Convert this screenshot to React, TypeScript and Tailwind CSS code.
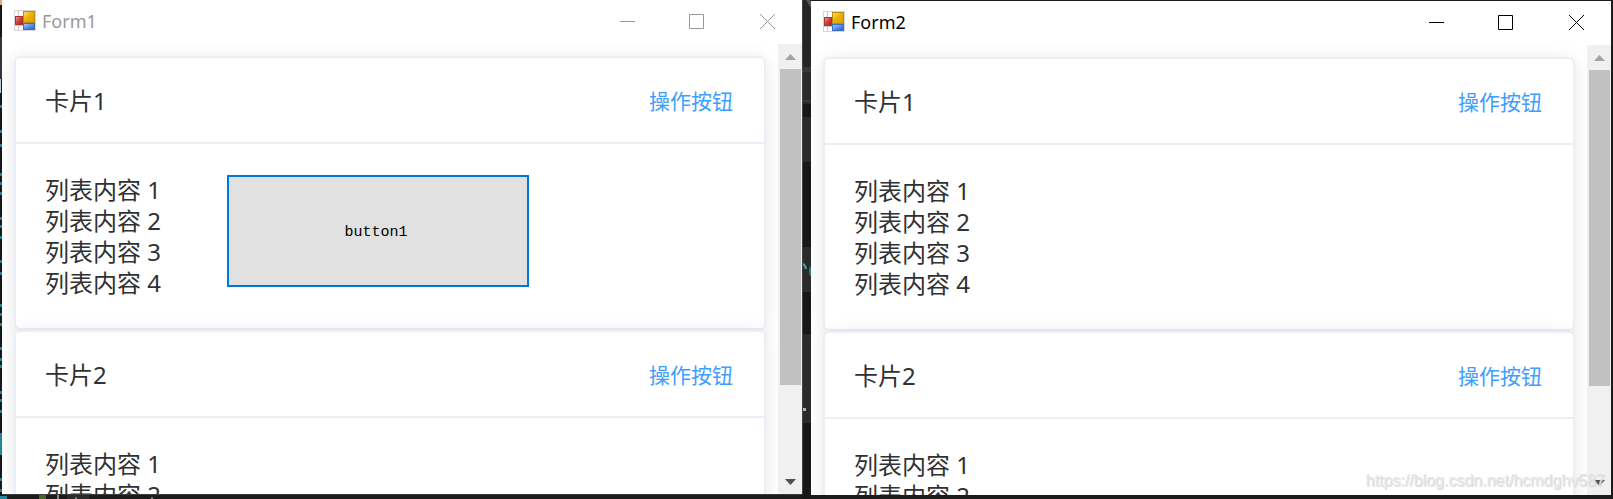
import React from "react";

interface CardProps {
  title: string;
  children?: React.ReactNode;
}

interface FormWindowProps {
  title: string;
  active?: boolean;
  children?: React.ReactNode;
}

const items = [1, 2, 3, 4];

// editor lines peeking out between the windows: [y, height, color]
const bands: [number, number, string][] = [
  [0, 67, "#252628"],
  [67, 5, "#39393b"],
  [72, 28, "#29292c"],
  [100, 2, "#39393b"],
  [102, 2, "#29292c"],
  [117, 45, "#2b2b2b"],
  [247, 45, "#2b2b2b"],
  [334, 89, "#2b2b2b"],
];

const dashes = [
  105, 130, 144, 173, 182, 192, 217, 225, 236, 260, 272, 304, 313, 323, 347,
  358, 365, 391, 399, 410, 478, 489,
];

const GapBackdrop = () => (
  <svg width="9" height="499" aria-hidden="true">
    <rect width="9" height="499" fill="#181818" />
    {bands.map(([y, height, color]) => (
      <rect key={y} y={y} width="9" height={height} fill={color} />
    ))}
    <path d="M4 0l5 8V2l-1-2z" fill="#55565a" />
    <path d="M0 264q3 0 4 5" fill="none" stroke="#3fae96" strokeWidth="2" />
    <path d="M9 267q-2 4 0 9" fill="none" stroke="#2a7f86" strokeWidth="2" />
    <rect y="408" width="4" height="3" fill="#b8b0a8" />
    <path d="M0.5 0v494" stroke="#444" />
  </svg>
);

const EdgeBackdrop = () => (
  <svg width="2" height="499" aria-hidden="true">
    <rect width="2" height="499" fill="#161616" />
    <rect width="2" height="5" fill="#d8b070" />
    <rect y="37" width="2" height="42" fill="#34343a" />
    <rect y="79" width="1" height="14" fill="#b8d0d0" />
    {dashes.map((y) => (
      <rect key={y} y={y} width="2" height="3" fill="#1f7f9c" />
    ))}
    <rect y="433" width="2" height="22" fill="#2385a0" />
    <rect y="496" width="2" height="3" fill="#2385a0" />
  </svg>
);

const BottomBackdrop = () => (
  <svg className="h-[5px] w-full" aria-hidden="true">
    <rect width="100%" height="1" fill="#3a3d3a" />
    <rect y="2" width="5" height="3" fill="#2385a0" />
    <rect x="37" y="1" width="7" height="4" fill="#4a6428" />
    <rect x="55" y="1" width="2" height="4" fill="#8a8a8a" />
    <rect x="65" y="1" width="22" height="4" fill="#2b2b2b" />
    <rect x="73" y="3" width="2" height="2" fill="#777" />
    <rect x="149" y="3" width="2" height="2" fill="#777" />
  </svg>
);

const FormIcon = () => (
  <svg width="22" height="22" viewBox="0 0 22 22" aria-hidden="true">
    <defs>
      <linearGradient id="gold" x1="0" y1="0" x2="1" y2="1">
        <stop offset="0" stopColor="#fbe27a" />
        <stop offset="0.45" stopColor="#edb200" />
        <stop offset="1" stopColor="#d89a00" />
      </linearGradient>
      <linearGradient id="red" x1="0" y1="0" x2="1" y2="1">
        <stop offset="0" stopColor="#f0a09a" />
        <stop offset="0.5" stopColor="#d04038" />
        <stop offset="1" stopColor="#a81c1c" />
      </linearGradient>
      <linearGradient id="blue" x1="0" y1="0" x2="1" y2="1">
        <stop offset="0" stopColor="#a9cbff" />
        <stop offset="0.5" stopColor="#5a90f0" />
        <stop offset="1" stopColor="#2458b8" />
      </linearGradient>
    </defs>
    <rect x="0.5" y="0.5" width="21" height="20" fill="#fff" stroke="#d6d6d6" />
    <path d="M4.5 15v5M1 15.5h8M4.5 1v5" stroke="#c8c8c8" />
    <rect x="9.5" y="1.5" width="11" height="11" fill="url(#gold)" stroke="#b98d10" />
    <rect x="1.5" y="6.5" width="7" height="8" fill="url(#red)" stroke="#a33" />
    <rect x="9.5" y="13.5" width="11" height="6" fill="url(#blue)" stroke="#3f6fc4" />
  </svg>
);

const Card = ({ title, children }: CardProps) => (
  <section className="relative shrink-0 rounded-md border-2 border-[#ebeef5] bg-white text-2xl text-[#303133] shadow-[0_3px_18px_rgba(0,0,0,0.1)]">
    <header className="flex h-[86px] items-center justify-between border-b-2 border-[#ebeef5] pt-0.5 pr-[31px] pl-[29px]">
      <h2>{title}</h2>
      <button type="button" className="text-[21px] text-[#409eff]">
        操作按钮
      </button>
    </header>
    <ul className="py-[30px] pl-[29px] leading-[31px]">
      {items.map((item) => (
        <li key={item}>列表内容 {item}</li>
      ))}
    </ul>
    {children}
  </section>
);

const ScrollBar = () => (
  <div className="flex w-6 shrink-0 flex-col bg-[#f0f0f0] pr-px pl-0.5">
    <button type="button" aria-label="Scroll up" className="flex h-[25px] items-center justify-center">
      <svg width="11" height="6" viewBox="0 0 11 6" fill="#a3a3a3">
        <path d="M5.5 0L11 6H0z" />
      </svg>
    </button>
    <div className="min-h-0 flex-1">
      <div className="h-[79%] bg-[#c1c1c1]" />
    </div>
    <button type="button" aria-label="Scroll down" className="flex h-[25px] items-center justify-center">
      <svg width="11" height="6" viewBox="0 0 11 6" fill="#505050">
        <path d="M0 0h11L5.5 6z" />
      </svg>
    </button>
  </div>
);

const captionButton = "flex h-full w-[70px] items-center justify-center";

const FormWindow = ({ title, active, children }: FormWindowProps) => (
  <div className="flex min-h-0 min-w-0 flex-1 flex-col bg-white">
    <div
      className={`flex h-11 shrink-0 items-center pl-3 ${
        active ? "text-black" : "text-[#999999]"
      }`}
    >
      <div className="flex flex-1 items-center gap-1.5 pb-0.5">
        <FormIcon />
        <h1 className="font-['Noto_Sans'] text-lg leading-6">{title}</h1>
      </div>
      <button type="button" aria-label="Minimize" className={captionButton}>
        <svg width="16" height="16" fill="none" stroke="currentColor">
          <path d="M1 7.5h15" />
        </svg>
      </button>
      <button type="button" aria-label="Maximize" className={captionButton}>
        <svg width="16" height="16" fill="none" stroke="currentColor">
          <path d="M0.5 0.5h14v14h-14z" />
        </svg>
      </button>
      <button type="button" aria-label="Close" className={captionButton}>
        <svg width="16" height="16" fill="none" stroke="currentColor">
          <path d="M1 0l15 15M16 0L1 15" />
        </svg>
      </button>
    </div>
    <div className="flex min-h-0 flex-1">
      <div className="flex min-w-0 flex-1 flex-col overflow-hidden p-3">
        {children}
      </div>
      <ScrollBar />
    </div>
  </div>
);

const App = () => {
  return (
    <main className="flex h-screen overflow-hidden bg-[#1b1b1b] pr-0.5 font-['Noto_Sans','Noto_Sans_CJK_SC',sans-serif]">
      <div className="w-0.5 shrink-0 overflow-hidden">
        <EdgeBackdrop />
      </div>
      <div className="flex min-w-0 flex-1 flex-col">
        <FormWindow title="Form1">
          <Card title="卡片1">
            <button
              type="button"
              className="absolute top-[117px] left-[211px] h-28 w-[302px] border-2 border-[#0078d7] bg-[#e1e1e1] pt-1 pr-1 font-['Liberation_Mono'] text-[15px] text-black"
            >
              button1
            </button>
          </Card>
          <Card title="卡片2" />
        </FormWindow>
        <BottomBackdrop />
      </div>
      <div className="w-[9px] shrink-0 overflow-hidden">
        <GapBackdrop />
      </div>
      <div className="relative flex min-w-0 flex-1 pt-px pb-1">
        <FormWindow title="Form2" active>
          <Card title="卡片1" />
          <Card title="卡片2" />
        </FormWindow>
        <span className="absolute right-[6px] bottom-[6px] font-['Liberation_Sans'] text-base text-[#e6e6e6] [text-shadow:1px_1px_1px_#d4d4d4]">
          https://blog.csdn.net/hcmdghv587
        </span>
      </div>
    </main>
  );
};

export default App;
